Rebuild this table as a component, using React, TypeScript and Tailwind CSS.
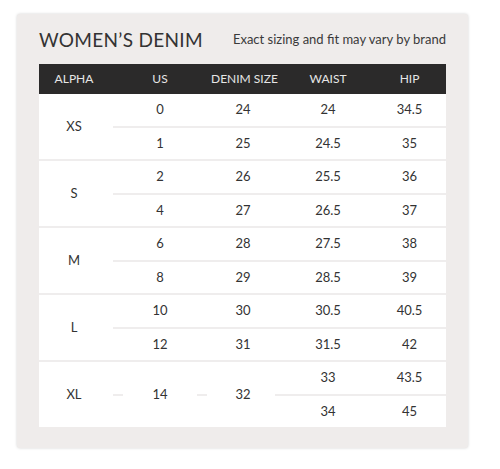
const groups = [
  { alpha: 'XS', rows: [['0', '24', '24', '34.5'], ['1', '25', '24.5', '35']] },
  { alpha: 'S', rows: [['2', '26', '25.5', '36'], ['4', '27', '26.5', '37']] },
  { alpha: 'M', rows: [['6', '28', '27.5', '38'], ['8', '29', '28.5', '39']] },
  { alpha: 'L', rows: [['10', '30', '30.5', '40.5'], ['12', '31', '31.5', '42']] }
];

const cols = 'grid grid-cols-[70px_102px_64px_106px_1fr] items-center';

export default function App() {
  return (
    <div className="h-[469px] w-[500px] bg-white pl-[17px] pt-[14px] font-['Lato',sans-serif] text-[#333]">
      <div className="w-[451px] rounded-[3px] bg-[#efeceb] px-[22px] pb-[21px] pt-[12px] shadow-[0_0_3px_rgba(0,0,0,0.18)]">
        <div className="flex h-[28px] items-center justify-between">
          <h1 className="text-[19px] font-normal tracking-[0.3px] text-[#333]">WOMEN&rsquo;S DENIM</h1>
          <span className="text-[13px] text-[#3a3a3a]">Exact sizing and fit may vary by brand</span>
        </div>
        <div className="mt-[10px] bg-white">
          <div className={`${cols} h-[30px] whitespace-nowrap bg-[#2b2a2a] text-center text-[12px] text-[#e6e6e6]`}>
            <span>ALPHA</span>
            <span>US</span>
            <span>DENIM SIZE</span>
            <span>WAIST</span>
            <span className="pr-[8px]">HIP</span>
          </div>
          {groups.map((g, gi) => (
            <div key={g.alpha} className={`flex ${gi > 0 ? 'border-t-2 border-[#efeded]' : ''}`}>
              <div className="flex w-[70px] items-center justify-center text-[13px]">{g.alpha}</div>
              <div className="flex-1">
                {g.rows.map((r, ri) => (
                  <div key={ri}>
                    {ri > 0 && <div className="ml-[4px] h-[2px] bg-[#efeded]" />}
                    <div
                      className={`grid grid-cols-[102px_64px_106px_1fr] items-center text-center text-[13px] ${
                        ri > 0 ? 'h-[31px]' : 'h-[32px]'
                      }`}
                    >
                      <span>{r[0]}</span>
                      <span>{r[1]}</span>
                      <span>{r[2]}</span>
                      <span className="pr-[8px]">{r[3]}</span>
                    </div>
                  </div>
                ))}
              </div>
            </div>
          ))}
          <div className="relative flex border-t-2 border-[#efeded]">
            <div className="flex w-[70px] items-center justify-center text-[13px]">XL</div>
            <div className="flex w-[102px] items-center justify-center text-[13px]">14</div>
            <div className="flex w-[64px] items-center justify-center text-[13px]">32</div>
            <div className="flex-1">
              <div className="grid h-[32px] grid-cols-[106px_1fr] items-center text-center text-[13px]">
                <span>33</span>
                <span className="pr-[8px]">43.5</span>
              </div>
              <div className="h-[2px] bg-[#efeded]" />
              <div className="grid h-[31px] grid-cols-[106px_1fr] items-center text-center text-[13px]">
                <span>34</span>
                <span className="pr-[8px]">45</span>
              </div>
            </div>
            <div className="absolute left-[74px] top-[32px] h-[2px] w-[10px] bg-[#efeded]" />
            <div className="absolute left-[158px] top-[32px] h-[2px] w-[10px] bg-[#efeded]" />
          </div>
        </div>
      </div>
    </div>
  );
}
